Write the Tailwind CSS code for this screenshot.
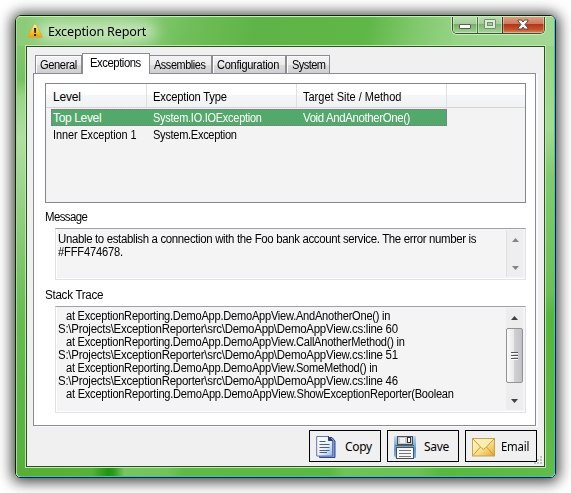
<!DOCTYPE html>
<html lang="en">
<head>
<meta charset="utf-8">
<title>Exception Report</title>
<script src="https://cdn.jsdelivr.net/npm/@tailwindcss/browser@4"></script>
</head>
<body class="w-[571px] h-[493px] overflow-hidden bg-white pl-[15px] pt-[15px] font-['Liberation_Sans',sans-serif] text-[12px] text-black">
<div class="relative w-[541px] h-[463px] rounded-[6px] rounded-b-[5px] border border-[#10200f] shadow-[0_1px_14px_3px_rgba(0,0,0,0.75)]">
<div class="relative flex flex-col h-[461px] w-[539px] rounded-[5px] overflow-hidden border-t border-l border-t-[#c9efbd] border-l-[#a9dc98] border-r border-b border-r-[#20c8f0] border-b-[#20c8f0] bg-[linear-gradient(180deg,#95d182_0,#a3dc91_24%,#82cb6c_35%,#6cc055_60%,#57b63d_65%,#5db945_90%,#62bb4b_100%)]">
  <!-- glass reflections -->
  <div class="absolute inset-x-0 top-0 h-[29px] bg-[linear-gradient(100deg,#8ccc77_0,#90cf7e_20%,#72bf5b_31%,#5eb446_44%,#5fb747_65%,#7dc769_73%,#98d487_82%,#a2d993_100%)]"></div>
  <div class="absolute left-0 bottom-0 w-full h-[11px] bg-[linear-gradient(90deg,#59ae35_0,#58b13a_14%,#42a82c_15%,#209313_17%,#2d9b1e_18%,#78c463_20%,#73c35d_28%,#60b948_31%,#5bb743_58%,#70c25a_61%,#6cc055_75%,#59b741_79%,#62bb4b_100%)]"></div>
  <div class="absolute left-0 top-[29px] w-[10px] h-[421px] bg-[linear-gradient(180deg,#82c86e_0,#75c260_8%,#98d586_12%,#b0e0a1_22%,#8ece7c_42%,#67bb50_65%,#55b13c_100%)]"></div>
  <!-- title bar -->
  <div class="relative flex h-[28px] shrink-0 items-center pl-[10px] pt-[1px]">
    <div class="absolute left-[20px] top-[5px] w-[120px] h-[19px] rounded-full bg-white/50 blur-[7px]"></div>
    <svg class="relative mt-[-2px]" width="16" height="16" viewBox="0 0 16 16">
      <defs><linearGradient id="w" x1="0" y1="0" x2="0" y2="1"><stop offset="0" stop-color="#fff1a0"/><stop offset=".6" stop-color="#f7c21c"/><stop offset="1" stop-color="#e79f12"/></linearGradient></defs>
      <path d="M8 1.2Q8.8 1 9.4 2L15 13Q15.5 14.6 14 14.6H2Q.5 14.6 1 13L6.6 2Q7.2 1.2 8 1.2Z" fill="url(#w)" stroke="#c9ab58" stroke-width=".7"/>
      <path d="M7 5h2.2L8.8 10H7.4ZM7.1 11h2v2h-2Z" fill="#202020"/>
    </svg>
    <div class="relative ml-[5px] mt-[-1px] origin-left scale-x-[0.97] font-['Noto_Sans',sans-serif] text-[13px] leading-[18px] tracking-[-0.18px] whitespace-nowrap">Exception Report</div>
    <div class="absolute left-[435px] top-[-1px] flex w-[93px] h-[18px] rounded-b-[5px] border border-t-0 border-[#34532f] shadow-[0_0_0_1px_rgba(255,255,255,0.5)] overflow-hidden">
      <div class="w-[25px] border-r border-[#4b7343] bg-[linear-gradient(180deg,#b9dfae_0,#a5cd99_45%,#76ad68_50%,#a0d592_100%)] shadow-[inset_0_0_0_1px_rgba(255,255,255,0.4)]">
        <div class="ml-[6px] mt-[8px] h-[5px] w-[12px] rounded-[1px] border border-[#53604f] bg-white"></div>
      </div>
      <div class="w-[25px] border-r border-[#4b3020] bg-[linear-gradient(180deg,#b9dfae_0,#a5cd99_45%,#7fb672_50%,#a0d592_100%)] shadow-[inset_0_0_0_1px_rgba(255,255,255,0.4)]">
        <div class="ml-[6px] mt-[3px] h-[10px] w-[12px] rounded-[1px] border border-[#758e70] bg-[#dcecd8] p-[2px]"><div class="h-[4px] border border-[#758e70] bg-[#a4cb9b]"></div></div>
      </div>
      <div class="flex-1 bg-[linear-gradient(180deg,#dda389_0,#cd7b60_45%,#b1361b_50%,#c4542a_80%,#e38a55_100%)] shadow-[inset_0_0_0_1px_rgba(255,255,255,0.35)]">
        <svg class="ml-[14px] mt-[3px]" width="12" height="11" viewBox="0 0 12 11"><path d="M1 1H4.5L6 3L7.5 1H11V2L8 5.5L11 9V10H7.5L6 8L4.5 10H1V9L4 5.5L1 2Z" fill="#fff" stroke="#5e4a4a"/></svg>
      </div>
    </div>
  </div>
  <!-- client area -->
  <div class="relative ml-[8px] w-[521px] h-[423px] border border-[#bfe8b3] shrink-0">
  <div class="h-[421px] w-[519px] border border-[#28531e] bg-[#f0f0f0]">
    <div class="flex h-[26px] items-end pl-[8px] pt-[6px] leading-[16px] whitespace-nowrap">
      <div class="h-[18px] w-[47px] border border-b-0 border-[#898c95] bg-[linear-gradient(180deg,#f3f3f3_0,#ebebeb_50%,#dcdcdc_52%,#cfcfcf_100%)] shadow-[inset_1px_1px_#fff] pl-[4px] pt-[1px]"><span class="inline-block origin-left scale-x-[0.93] tracking-[-0.45px]">General</span></div>
      <div class="relative z-10 h-[21px] w-[68px] border border-b-0 border-[#898c95] bg-white pl-[7px] pt-[1px] -mb-[1px]"><span class="inline-block origin-left scale-x-[0.945] tracking-[-0.5px]">Exceptions</span></div>
      <div class="h-[18px] w-[62px] border border-l-0 border-b-0 border-[#898c95] bg-[linear-gradient(180deg,#f3f3f3_0,#ebebeb_50%,#dcdcdc_52%,#cfcfcf_100%)] pl-[4px] pt-[1px]"><span class="inline-block origin-left scale-x-[0.905] tracking-[-0.45px]">Assemblies</span></div>
      <div class="h-[18px] w-[74px] border border-b-0 border-[#898c95] bg-[linear-gradient(180deg,#f3f3f3_0,#ebebeb_50%,#dcdcdc_52%,#cfcfcf_100%)] shadow-[inset_1px_1px_#fff] pl-[4px] pt-[1px]"><span class="inline-block origin-left scale-x-[0.92] tracking-[-0.3px]">Configuration</span></div>
      <div class="h-[18px] w-[44px] border border-b-0 border-[#898c95] bg-[linear-gradient(180deg,#f3f3f3_0,#ebebeb_50%,#dcdcdc_52%,#cfcfcf_100%)] shadow-[inset_1px_1px_#fff] pl-[5px] pt-[1px]"><span class="inline-block origin-left scale-x-[0.92] tracking-[-0.6px]">System</span></div>
    </div>
    <div class="ml-[6px] w-[503px] h-[353px] border border-[#898c95] bg-white pl-[11px] pt-[9px] shadow-[2px_1px_#fafafa]">
      <!-- exception list -->
      <div class="w-[481px] h-[120px] border border-[#828790] bg-[#f3f3f3] whitespace-nowrap">
        <div class="flex h-[24px] border-b border-[#d5d5d5] bg-[linear-gradient(180deg,#fff_0,#fff_45%,#f5f6f7_50%,#f1f2f4_100%)] leading-[26px]">
          <div class="w-[101px] border-r border-[#dfe0e2] pl-[7px] tracking-[-0.2px]">Level</div>
          <div class="w-[150px] border-r border-[#dfe0e2] pl-[6px] tracking-[-0.2px]"><span class="inline-block origin-left scale-x-[0.935]">Exception Type</span></div>
          <div class="w-[150px] border-r border-[#dfe0e2] pl-[6px]"><span class="inline-block origin-left scale-x-[0.917]">Target Site / Method</span></div>
        </div>
        <div class="ml-[5px] mt-[1px] flex w-[396px] h-[17px] bg-[#52a96b] outline-1 -outline-offset-1 outline-dotted outline-[#ad5694]/70 leading-[18px] text-white">
          <div class="w-[100px] pl-[2px] tracking-[-0.35px]">Top Level</div>
          <div class="w-[150px] pl-[2px] tracking-[-0.25px]"><span class="inline-block origin-left scale-x-[0.91]">System.IO.IOException</span></div>
          <div class="w-[146px] pl-[2px] tracking-[-0.4px]"><span class="inline-block origin-left scale-x-[0.955]">Void AndAnotherOne()</span></div>
        </div>
        <div class="ml-[5px] flex h-[17px] leading-[18px]">
          <div class="w-[100px] pl-[2px] tracking-[-0.1px]"><span class="inline-block origin-left scale-x-[0.91]">Inner Exception 1</span></div>
          <div class="w-[150px] pl-[2px] tracking-[-0.35px]"><span class="inline-block origin-left scale-x-[0.925]">System.Exception</span></div>
        </div>
      </div>
      <div class="h-[25px] pt-[6px] leading-[16px]"><span class="inline-block origin-left scale-x-[0.95] tracking-[-0.6px]">Message</span></div>
      <div class="ml-[10px] flex w-[471px] h-[52px] border border-[#dfe2ec] border-t-[#9fa1a8] bg-[#f4f4f4] justify-between shadow-[inset_1px_-1px_#fff]">
        <div class="w-[445px] pl-[2px] pt-[4px] leading-[13px] whitespace-nowrap"><div class="origin-left scale-x-[0.953] tracking-[-0.36px]">Unable to establish a connection with the Foo bank account service. The error number is</div><div class="origin-left scale-x-[0.93] tracking-[-0.2px]">#FFF474678.</div></div>
        <div class="mr-[2px] mt-[1px] mb-[2px] flex w-[17px] flex-col items-center justify-between border-l border-[#e2e2e2] bg-[#eeeeee] pt-[8px] pb-[7px]">
          <svg width="7" height="4" viewBox="0 0 7 4"><path d="M0 4L3.5 0L7 4Z" fill="#858585"/></svg>
          <svg width="7" height="4" viewBox="0 0 7 4"><path d="M0 0L3.5 4L7 0Z" fill="#858585"/></svg>
        </div>
      </div>
      <div class="h-[26px] pt-[7px] leading-[16px]"><span class="inline-block origin-left scale-x-[0.97] tracking-[-0.3px]">Stack Trace</span></div>
      <div class="ml-[10px] flex w-[471px] h-[107px] border border-[#dfe2ec] border-t-[#9fa1a8] bg-[#f4f4f4] justify-between shadow-[inset_1px_-1px_#fff]">
        <div class="w-[445px] pl-[2px] pt-[3px] leading-[13px] whitespace-pre tracking-[-0.25px]"><div class="ml-[8px] origin-left scale-x-[0.922]">at ExceptionReporting.DemoApp.DemoAppView.AndAnotherOne() in</div><div class="origin-left scale-x-[0.953]">S:\Projects\ExceptionReporter\src\DemoApp\DemoAppView.cs:line 60</div><div class="ml-[8px] origin-left scale-x-[0.922]">at ExceptionReporting.DemoApp.DemoAppView.CallAnotherMethod() in</div><div class="origin-left scale-x-[0.953]">S:\Projects\ExceptionReporter\src\DemoApp\DemoAppView.cs:line 51</div><div class="ml-[8px] origin-left scale-x-[0.922]">at ExceptionReporting.DemoApp.DemoAppView.SomeMethod() in</div><div class="origin-left scale-x-[0.953]">S:\Projects\ExceptionReporter\src\DemoApp\DemoAppView.cs:line 46</div><div class="ml-[8px] origin-left scale-x-[0.924]">at ExceptionReporting.DemoApp.DemoAppView.ShowExceptionReporter(Boolean</div></div>
        <div class="mr-[2px] mt-[1px] mb-[2px] flex w-[17px] flex-col items-center bg-[#ededed] pt-[8px]">
          <svg class="shrink-0" width="7" height="4" viewBox="0 0 7 4"><path d="M0 4L3.5 0L7 4Z" fill="#404040"/></svg>
          <div class="mt-[8px] flex h-[55px] w-[17px] flex-col items-center justify-center gap-[1px] rounded-[2px] border border-[#929292] bg-[linear-gradient(90deg,#fafafa_0,#e9e9e9_45%,#d0d0d2_50%,#c1c2c6_100%)] shrink-0">
            <div class="h-[2px] w-[7px] border-b border-white bg-[#555]"></div><div class="h-[2px] w-[7px] border-b border-white bg-[#555]"></div><div class="h-[2px] w-[7px] border-b border-white bg-[#555]"></div>
          </div>
          <svg class="mt-[16px] shrink-0" width="7" height="4" viewBox="0 0 7 4"><path d="M0 0L3.5 4L7 0Z" fill="#404040"/></svg>
        </div>
      </div>
    </div>
    <!-- actions -->
    <div class="relative flex justify-end gap-[6px] pr-[7px] pt-[4px] font-['Noto_Sans',sans-serif] text-[12px] leading-[30px]">
      <div class="flex h-[32px] w-[72px] border border-black pl-[6px]">
        <svg class="mt-[4px]" width="20" height="24" viewBox="0 0 20 24">
          <defs><linearGradient id="p" x1="0" y1="0" x2="1" y2="1"><stop offset="0" stop-color="#fff"/><stop offset=".6" stop-color="#e5effd"/><stop offset="1" stop-color="#8fb7ee"/></linearGradient></defs>
          <path d="M3.5 2.5H16L19 6V22.5H3.5Z" fill="#7f95cf" stroke="#35458c"/>
          <path d="M.7 1.5H12.5L16.5 5.5V21H.7Z" fill="url(#p)" stroke="#6076b0"/>
          <path d="M12.5 1.5V5.5H16.5Z" fill="#293b83" stroke="#293b83"/>
          <path d="M3.5 6.5H9.5M3.5 9.5H13.5M3.5 12.5H13.5M3.5 15.5H13.5M3.5 17.5H11" stroke="#4b5f86"/>
        </svg>
        <span class="ml-[9px] mt-[1px] tracking-[-0.3px]">Copy</span>
      </div>
      <div class="flex h-[32px] w-[72px] border border-black pl-[6px]">
        <svg class="mt-[4px]" width="22" height="24" viewBox="0 0 22 24">
          <defs><linearGradient id="f" x1="0" y1="0" x2="0" y2="1"><stop offset="0" stop-color="#b8dcf4"/><stop offset=".6" stop-color="#579bd0"/><stop offset="1" stop-color="#7bb9e2"/></linearGradient></defs>
          <path d="M1 1H21Q22 1 22 2V23H2L0 21V2Q0 1 1 1Z" fill="url(#f)"/>
          <rect x="3.5" y="1.5" width="15" height="8" fill="#c9cbcd" stroke="#4d5155"/>
          <path d="M6 3H11V8H6Z" fill="#eef0f1"/><rect x="13.5" y="2.5" width="3" height="5" fill="#fff" stroke="#343434"/>
          <path d="M1.5 10.5H20" stroke="#5a6066"/>
          <rect x="2.5" y="12.5" width="17" height="11" fill="#f6f6f6" stroke="#4d5155"/>
          <path d="M5 15.5H17M5 18.5H17M5 21.5H17" stroke="#777"/>
        </svg>
        <span class="ml-[8px] mt-[1px] tracking-[-0.3px]">Save</span>
      </div>
      <div class="flex h-[32px] w-[72px] border border-black pl-[6px]">
        <svg class="mt-[7px]" width="23" height="19" viewBox="0 0 23 19">
          <defs><linearGradient id="e" x1="0" y1="0" x2="1" y2="1"><stop offset="0" stop-color="#fff9d5"/><stop offset=".5" stop-color="#fae394"/><stop offset="1" stop-color="#e2a927"/></linearGradient></defs>
          <rect x=".5" y=".5" width="22" height="17.5" fill="url(#e)" stroke="#cda147"/>
          <path d="M1 17.5L8.5 9M22 17.5L14.5 9" stroke="#c99a3d" fill="none"/>
          <path d="M1 1L10 10.5Q11.5 12 13 10.5L22 1" fill="#fdf0b8" fill-opacity=".7" stroke="#c9983b"/>
        </svg>
        <span class="ml-[6px] mt-[1px] origin-left scale-x-[0.95] tracking-[-0.25px]">Email</span>
      </div>
      <svg class="absolute right-[1px] bottom-[-3px]" width="9" height="9" viewBox="0 0 9 9"><path d="M6 0h2v2H6zM3 3h2v2H3zM6 3h2v2H6zM0 6h2v2H0zM3 6h2v2H3zM6 6h2v2H6z" fill="#c1c1c1"/></svg>
    </div>
  </div>
  </div>
</div>
</div>
</body>
</html>
